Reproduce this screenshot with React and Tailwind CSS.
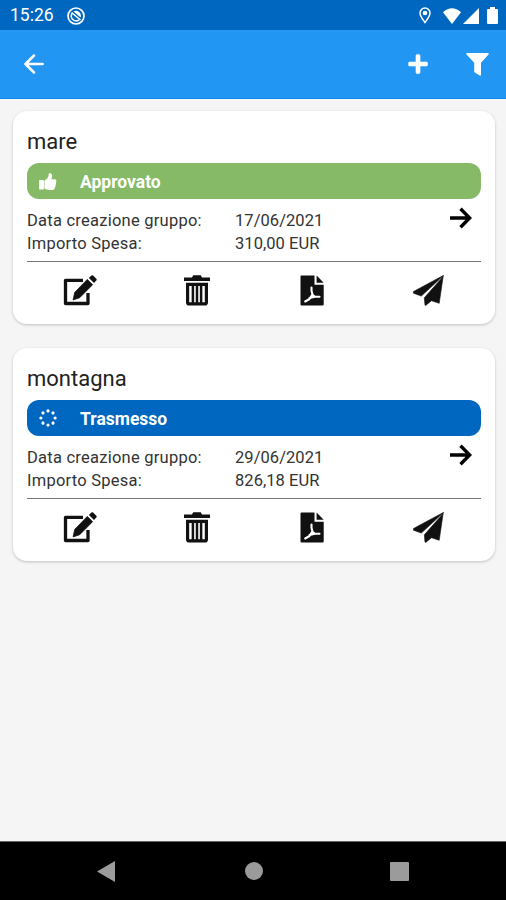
import React from "react";
import { FaPlus } from "react-icons/fa";

const GROUPS = [
  { id: 1, name: "mare", status: "approved", label: "Approvato", date: "17/06/2021", amount: "310,00 EUR" },
  { id: 2, name: "montagna", status: "sent", label: "Trasmesso", date: "29/06/2021", amount: "826,18 EUR" },
];

const DOTS = [0, 45, 90, 135, 180, 225, 270, 315];

function ArrowRight({ className }) {
  return (
    <svg viewBox="0 0 22 22" className={className} fill="none" stroke="currentColor" strokeWidth="3.4">
      <path d="M0 11h20M10.500 1.800l9.200 9.200-9.200 9.200" />
    </svg>
  );
}

function ArrowLeft({ className }) {
  return (
    <svg viewBox="0 0 20 20" className={className} fill="none" stroke="currentColor" strokeWidth="2.5" strokeLinecap="round" strokeLinejoin="round">
      <path d="M18.700 10H1.800M10 1.500L1.500 10l8.500 8.500" />
    </svg>
  );
}

function FilterIcon() {
  return (
    <svg viewBox="0 0 23 23" className="ml-[38px] h-[23px] w-[23px]" fill="currentColor">
      <path d="M.8 0h21.400q1 .6.3 1.500L15 9.800V22q-.4 1-1.400.5L8.800 19.500q-.6-.5-.6-1.200V9.800L.5 1.500Q-.2.6.8 0z" />
    </svg>
  );
}

function ThumbIcon() {
  return (
    <svg viewBox="0 0 18 17" className="h-[17px] w-[18px]" fill="currentColor">
      <path d="M.8 7h3.400q.7 0 .7.700v8.200q0 .7-.7.700H.8q-.7 0-.7-.7V7.700Q.1 7 .8 7z" />
      <path d="M5.400 8l3.300-3.300Q9.600 3.500 9.800.8q.2-.7 1-.7 2.400.3 2.400 2.900 0 1.600-1 3.300h3.600q1.500.2 1.600 1.800 0 1-.6 1.500.8 1.300-.3 2.600.4 1.300-.6 2.300.1 2.200-2.200 2.400h-3.500q-2.300-.1-4.800-1.500z" />
    </svg>
  );
}

function EditIcon() {
  return (
    <svg viewBox="0 0 34 31" className="h-[31px] w-[34px]">
      <path d="M20 5.300H2.500v23.200h22.500V18" fill="none" stroke="currentColor" strokeWidth="3.300" strokeLinejoin="round" />
      <path d="M24 2.800l7 7L17.500 23.600l-8.500 2.700L11 17z" fill="#fff" />
      <path d="M24.300 4.400l5.300 5.300L16.700 22.700l-6.600 2.200 1.600-7.500z" fill="currentColor" stroke="currentColor" strokeWidth=".8" strokeLinejoin="round" />
      <path d="M25.900 3L28.300.6q.9-.8 1.800 0l3.200 3.200q.8.900 0 1.800L31 8z" fill="currentColor" />
    </svg>
  );
}

function TrashIcon() {
  return (
    <svg viewBox="0 0 26 31" className="h-[31px] w-[26px]">
      <path d="M8 2.500L9.200.3h7.600L18 2.500h8v3.600H0V2.500z" fill="currentColor" />
      <path d="M3.600 9.400h18.800v18q0 1.500-1.500 1.500H5.100q-1.500 0-1.500-1.500z" fill="none" stroke="currentColor" strokeWidth="3.200" />
      <path d="M8.900 10v18M13 10v18M17.100 10v18" stroke="currentColor" strokeWidth="2.500" />
    </svg>
  );
}

function PdfIcon() {
  return (
    <svg viewBox="0 0 24 31" className="h-[31px] w-[24px]">
      <path d="M1.500.5H14.500v9.200H23.700v19.800q0 1-1 1H1.500q-1 0-1-1V1.500q0-1 1-1zM16.600.5l7.100 7.200h-7.100z" fill="currentColor" />
      <path d="M11.500 12.500v3.300l1 3.900 2.500 2h4.500M12.300 19.500L9.500 24l-4.300 2.500M9.500 23l5.500-1.300" fill="none" stroke="#fff" strokeWidth="2.100" strokeLinecap="round" strokeLinejoin="round" />
    </svg>
  );
}

function PlaneIcon() {
  return (
    <svg viewBox="0 0 31 31" className="h-[31px] w-[31px]" fill="currentColor" stroke="currentColor" strokeWidth=".6" strokeLinejoin="round">
      <path d="M30.300.5L.5 16.500v1.700l7.800 2.900L26 4.800z" />
      <path d="M30.300.5L26.200 28.300l-7.700-2.600-5.500 4.500h-1L11.300 22.800 27.300 4.800z" />
    </svg>
  );
}

function SpinnerIcon() {
  return (
    <svg viewBox="0 0 18 18" className="h-[18px] w-[18px]" fill="currentColor">
      {DOTS.map((a) => (
        <circle key={a} cx="9" cy="1.900" r="1.600" transform={`rotate(${a} 9 9)`} />
      ))}
    </svg>
  );
}

function StatusBar() {
  return (
    <div className="flex h-[30px] shrink-0 items-center bg-[#0067c0] pl-[10px] pr-[8px] pt-px text-white">
      <span className="w-[57px] pt-px text-[17.5px] leading-none">15:26</span>
      <svg viewBox="0 0 18 18" className="h-[18px] w-[18px]" fill="none" stroke="currentColor">
        <circle cx="9" cy="9" r="8" strokeWidth="1.700" />
        <path d="M5 6.500A4.800 4.800 0 0 0 12 12.800" strokeWidth="1.500" />
        <path d="M4.500 5.500L13.500 13" strokeWidth="1.500" />
        <path d="M6.500 4.500q3-1.500 5.500.5t1.700 5.500z" fill="currentColor" stroke="none" />
      </svg>
      <svg viewBox="0 0 12 17" className="ml-auto h-[17px] w-[12px]" fill="none" stroke="currentColor" strokeWidth="1.500">
        <path d="M6 15.500C3.500 12 1 9.200 1 6a5 5 0 0110 0c0 3.200-2.500 6-5 9.500z" />
        <circle cx="6" cy="6" r="1.600" fill="currentColor" />
      </svg>
      <svg viewBox="0 0 18 16" className="ml-[12px] h-[16px] w-[18px]" fill="currentColor">
        <path d="M9 16L0 4.200Q9-3.500 18 4.200z" />
      </svg>
      <svg viewBox="0 0 16 16" className="ml-[2px] h-[16px] w-[16px]" fill="currentColor">
        <path d="M16 0v16H0z" />
      </svg>
      <svg viewBox="0 0 11 17" className="ml-[8px] h-[17px] w-[11px]" fill="currentColor">
        <path d="M3 0h5v2h2q1 0 1 1v13q0 1-1 1H1q-1 0-1-1V3q0-1 1-1h2z" />
      </svg>
    </div>
  );
}

function GroupCard({ group }) {
  const approved = group.status === "approved";
  return (
    <article className="h-[213px] rounded-[14px] bg-white px-[14px] pt-[16px] text-[#333] shadow-[0_1px_3px_rgba(0,0,0,0.22)]">
      <h2 className="h-[36px] text-[22px] leading-[30px] text-[#222]">{group.name}</h2>
      <div
        className={
          "flex h-[36px] items-center rounded-[12px] pl-[12px] text-white " +
          (approved ? "bg-[#86ba66]" : "bg-[#0067c0]")
        }
      >
        <span className="w-[41px]">{approved ? <ThumbIcon /> : <SpinnerIcon />}</span>
        <span className="pt-[3px] text-[17.5px] leading-none font-bold">{group.label}</span>
      </div>
      <div className="flex h-[63px] border-b border-[#777] pt-[9px] text-[16.5px] leading-[23px]">
        <dl className="grid grid-cols-[208px_1fr] content-start pt-px">
          <dt className="tracking-[0.24px]">Data creazione gruppo:</dt>
          <dd className="tracking-[0.05px]">{group.date}</dd>
          <dt className="tracking-[0.24px]">Importo Spesa:</dt>
          <dd className="tracking-[0.05px]">{group.amount}</dd>
        </dl>
        <ArrowRight className="-mt-px mr-[9px] ml-auto h-[22px] w-[22px] text-black" />
      </div>
      <div className="flex h-[57px] items-center pl-[36px] text-[#111]">
        <div className="w-[120.5px]"><EditIcon /></div>
        <div className="w-[116.5px]"><TrashIcon /></div>
        <div className="w-[113px]"><PdfIcon /></div>
        <PlaneIcon />
      </div>
    </article>
  );
}

export default function App() {
  return (
    <div className="flex h-[900px] w-[506px] flex-col overflow-hidden bg-[#f5f5f5] font-['Roboto',sans-serif]">
      <StatusBar />
      <header className="flex h-[69px] shrink-0 items-center border-b border-[#1287ea] bg-[#2196f3] pl-[24px] pr-[17.5px] text-white">
        <ArrowLeft className="h-[20px] w-[20px]" />
        <FaPlus className="ml-auto h-[22px] w-[20px]" stroke="currentColor" strokeWidth="12" />
        <FilterIcon />
      </header>
      <main className="flex grow flex-col gap-[24px] pl-[13px] pr-[11px] pt-[12px]">
        {GROUPS.map((g) => (
          <GroupCard key={g.id} group={g} />
        ))}
      </main>
      <nav className="flex h-[59px] shrink-0 items-center border-t border-[#666] bg-black pl-[97px] text-[#9b9b9b]">
        <svg viewBox="0 0 18 21" className="h-[21px] w-[18px]" fill="currentColor">
          <path d="M18 0v21L0 10.500z" />
        </svg>
        <span className="ml-[130px] h-[18px] w-[18px] rounded-full bg-[#9b9b9b]" />
        <span className="ml-[127px] h-[19px] w-[19px] rounded-[1px] bg-[#9b9b9b]" />
      </nav>
    </div>
  );
}
